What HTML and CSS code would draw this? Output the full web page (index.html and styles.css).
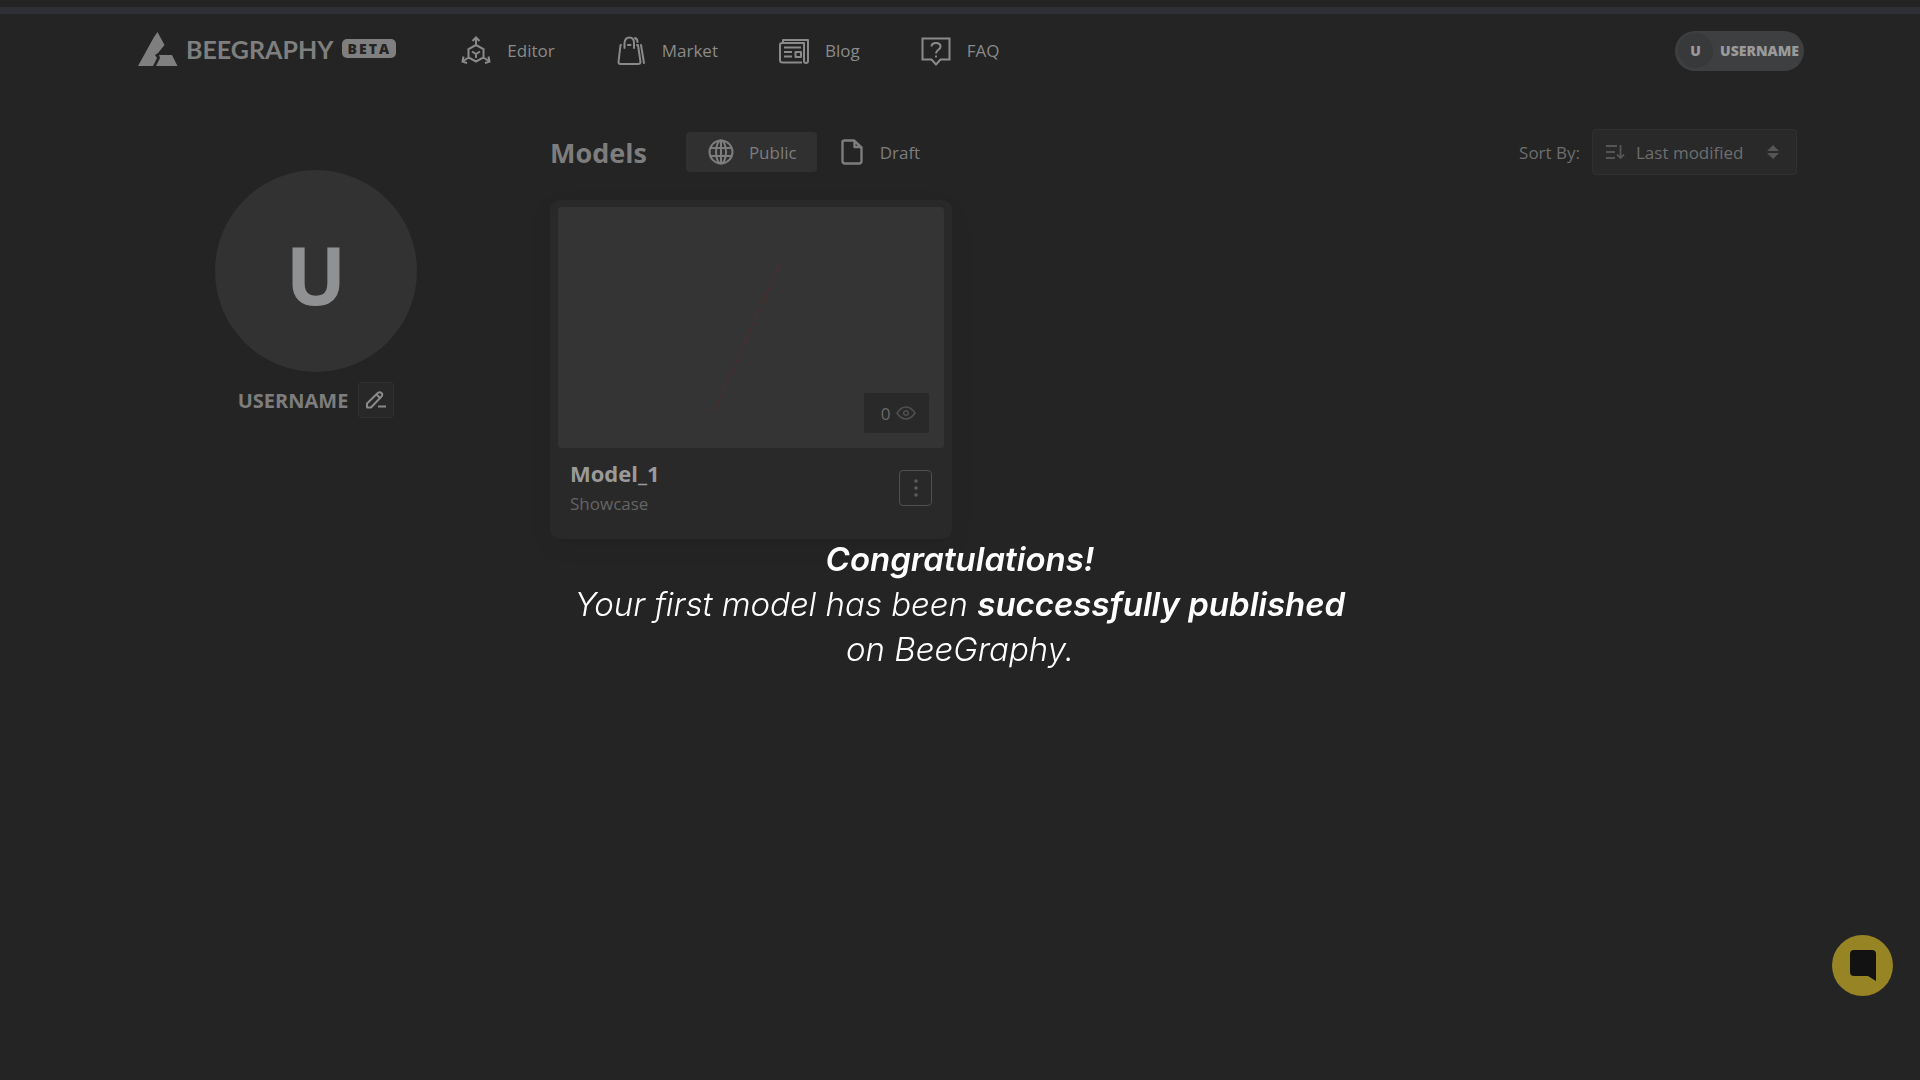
FILE: index.html
```html
<!DOCTYPE html>
<html lang="en">
<head>
    <meta charset="UTF-8">
    <meta name="viewport" content="width=device-width, initial-scale=1.0">
    <title>BeeGraphy - Models</title>
    <link rel="stylesheet" href="styles.css">
</head>
<body>
    <div class="strip"></div>

    <header class="header">
        <a class="logo" href="#">
            <svg width="40" height="34" viewBox="0 0 40 34" fill="currentColor">
                <path d="M19.500 0 26.500 13 20 21 17 23 19 26 15 34H0L16 5z"/>
                <path d="M21 23H34L39.500 34H18L22 26z"/>
            </svg>
            <span class="logo-name">BEEGRAPHY</span>
            <span class="beta">BETA</span>
        </a>
        <nav class="nav">
            <a href="#">
                <svg width="30" height="30" viewBox="0 0 30 30" fill="none" stroke="currentColor" stroke-width="2">
                    <path d="M15 9 22.500 13V21.500L15 25.500 7.500 21.500V13zM11 15.500 15 18 19 15.500M15 18V22M15 9V2M11.500 5 15 1.500 18.500 5M7.500 21.500 1.500 25.500M2.500 20.500 1.500 25.500 6 27M22.500 21.500 28.500 25.500M27.500 20.500 28.500 25.500 24 27"/>
                </svg>
                Editor
            </a>
            <a href="#">
                <svg width="30" height="30" viewBox="0 0 30 30" fill="none" stroke="currentColor" stroke-width="2" stroke-linecap="round" stroke-linejoin="round">
                    <path d="M5 9H4.500L2.500 26Q2.500 28 4.500 28H22Q24.500 28 24.500 26L22 9H21M12 9H14.500M8.500 12V7Q9 1.500 13.500 1.500T18 7V12M19 2Q21.500 3 21.500 6M25 9 28 27"/>
                </svg>
                Market
            </a>
            <a href="#">
                <svg width="30" height="30" viewBox="0 0 30 30" fill="none" stroke="currentColor" stroke-width="2" stroke-linejoin="round">
                    <path d="M4 6V4H29V25Q29 27 27 27T25 25V7H3Q1 7 1 9V24Q1 26.500 3.500 26.500H23M5 11.500H22M5 16H13M5 20.500H13M16.500 16H22V21H16.500z"/>
                </svg>
                Blog
            </a>
            <a href="#">
                <svg width="30" height="30" viewBox="0 0 30 30" fill="none" stroke="currentColor" stroke-width="2">
                    <path d="M1.500 2.500H28.500V23.500H19.500L15 28.500 10.500 23.500H1.500z"/>
                    <path d="M10.500 10.500Q10.500 7 15 7T19.500 10.500C19.500 14 15 13.500 15 17.500M15 19.500V21.500"/>
                </svg>
                FAQ
            </a>
        </nav>
        <button class="user-pill" type="button">
            <span class="user-initial">U</span>
            USERNAME
        </button>
    </header>

    <main class="page">
        <aside class="profile">
            <div class="avatar">U</div>
            <div class="profile-name">
                <span>USERNAME</span>
                <button class="edit-btn" type="button" aria-label="Edit name">
                    <svg width="20" height="18" viewBox="0 0 20 18" fill="none" stroke="currentColor" stroke-width="2" stroke-linejoin="round">
                        <path d="M1 16.500V12.500L12 1.800Q14 .5 15.500 2T15.500 5.500L5 16.500zM10.500 3.500 14 7M12 15.500H20"/>
                    </svg>
                </button>
            </div>
        </aside>

        <section class="models">
            <div class="toolbar">
                <h1>Models</h1>
                <button class="tab active" type="button">
                    <svg width="26" height="26" viewBox="0 0 26 26" fill="none" stroke="currentColor" stroke-width="2">
                        <circle cx="13" cy="13" r="11.500"/>
                        <ellipse cx="13" cy="13" rx="5" ry="11.500"/>
                        <path d="M13 1.500V24.500M2.500 9H23.500M2.500 17H23.500"/>
                    </svg>
                    Public
                </button>
                <button class="tab" type="button">
                    <svg width="26" height="26" viewBox="0 0 26 26" fill="none" stroke="currentColor" stroke-width="2.400" stroke-linejoin="round">
                        <path d="M5 1.500H15L22.500 8.500V22Q22.500 24.500 20 24.500H6Q3.500 24.500 3.500 22V3Q3.500 1.500 5.500 1.500M15.500 1.500V8H22.500"/>
                    </svg>
                    Draft
                </button>
                <div class="sort">
                    <label for="sort">Sort By:</label>
                    <div class="select-box">
                        <svg width="19" height="16" viewBox="0 0 19 16" fill="none" stroke="currentColor" stroke-width="1.800">
                            <path d="M0 2H11M0 8H9M0 14H9M14.500 1V14M11 10.500 14.500 14 18 10.500"/>
                        </svg>
                        <select id="sort">
                            <option>Last modified</option>
                        </select>
                        <svg width="12" height="14" viewBox="0 0 12 14" fill="currentColor">
                            <path d="M6 0 12 6H0zM0 8H12L6 14z"/>
                        </svg>
                    </div>
                </div>
            </div>

            <article class="card">
                <div class="preview">
                    <svg class="curve" width="68" height="150" viewBox="0 0 68 150" fill="none" stroke="#542b2d">
                        <path d="M67 1 1 149" stroke-dasharray="14 2"/>
                    </svg>
                    <div class="views">
                        0
                        <svg width="20" height="14" viewBox="0 0 20 14" fill="none" stroke="currentColor" stroke-width="1.500">
                            <path d="M1 7Q5 1 10 1T19 7Q15 13 10 13T1 7z"/>
                            <circle cx="10" cy="7" r="2.300"/>
                        </svg>
                    </div>
                </div>
                <div class="card-info">
                    <div>
                        <h2>Model_1</h2>
                        <p>Showcase</p>
                    </div>
                    <button class="more-btn" type="button" aria-label="More options">
                        <svg width="4" height="20" viewBox="0 0 4 20" fill="currentColor">
                            <circle cx="2" cy="3" r="1.800"/>
                            <circle cx="2" cy="10" r="1.800"/>
                            <circle cx="2" cy="17" r="1.800"/>
                        </svg>
                    </button>
                </div>
            </article>
        </section>
    </main>

    <div class="message">
        <p><b>Congratulations!</b><br>Your first model has been <b>successfully published</b><br>on BeeGraphy.</p>
    </div>

    <button class="chat-btn" type="button" aria-label="Open chat">
        <svg width="26" height="31" viewBox="0 0 26 31" fill="currentColor">
            <path d="M4 0H22Q26 0 26 4V31L18 26H4Q0 26 0 22V4Q0 0 4 0z"/>
        </svg>
    </button>
</body>
</html>
```

FILE: styles.css
```css
* {
    box-sizing: border-box;
}

body {
    font-family: 'Segoe UI', 'Open Sans', sans-serif;
    font-size: 17px;
    margin: 0;
    padding-top: 7px;
    min-height: 100vh;
    background-color: #242424;
    color: #7d7d7d;
}

a {
    color: inherit;
    text-decoration: none;
}

button,
select {
    font: inherit;
    color: inherit;
    border: none;
    padding: 0;
    background: none;
    cursor: pointer;
}

h1, h2, p {
    margin: 0;
}

svg {
    display: block;
    flex-shrink: 0;
}

.strip {
    height: 7px;
    background-color: #2f3035;
}

.header {
    display: flex;
    align-items: center;
    height: 73px;
    padding: 0 116px 0 138px;
}

.logo {
    display: flex;
    align-items: center;
    padding-bottom: 4px;
    color: #7f7f7f;
}

.logo-name {
    margin: 0 9px 0 8px;
    font-family: Lato, sans-serif;
    font-size: 25px;
    font-weight: bold;
    line-height: 32px;
}

.beta {
    width: 54px;
    border-radius: 5px;
    background-color: #7f7f7f;
    color: #242424;
    font-size: 14px;
    font-weight: 800;
    line-height: 19px;
    letter-spacing: 2px;
    text-align: center;
}

.nav {
    display: flex;
    gap: 61px;
    margin-left: 65px;
}

.nav a {
    display: flex;
    align-items: center;
    gap: 16px;
    color: #8a8a8a;
}

.user-pill {
    display: flex;
    align-items: center;
    gap: 7px;
    height: 40px;
    margin-left: auto;
    padding: 0 5px 0 3px;
    border-radius: 20px;
    background-color: #3e3f40;
    color: #9a9a9a;
    font-size: 14px;
    font-weight: 800;
}

.user-initial {
    width: 35px;
    border-radius: 50%;
    background-color: #38393a;
    line-height: 35px;
}

.page {
    display: flex;
    gap: 56px;
    padding: 42px 123px 0 138px;
}

.profile {
    flex: 0 0 356px;
    display: flex;
    flex-direction: column;
    align-items: center;
    gap: 10px;
    padding-top: 41px;
}

.avatar {
    width: 202px;
    height: 202px;
    border-radius: 50%;
    background-color: #323232;
    color: #909192;
    font-size: 80px;
    font-weight: bold;
    line-height: 208px;
    text-align: center;
}

.profile-name {
    display: flex;
    align-items: center;
    gap: 10px;
    font-size: 20px;
    font-weight: bold;
}

.edit-btn {
    display: grid;
    place-items: center;
    width: 36px;
    height: 36px;
    border: 1px solid #303030;
    border-radius: 4px;
    background-color: #282828;
    color: #8a8a8a;
}

.models {
    flex: 1;
}

.toolbar {
    display: flex;
    align-items: center;
    height: 46px;
    margin-bottom: 25px;
}

.toolbar h1 {
    margin-right: 39px;
    font-size: 27px;
}

.tab {
    display: flex;
    align-items: center;
    gap: 15px;
    height: 40px;
    padding: 0 20px 0 22px;
    border-radius: 4px;
}

.tab.active {
    background-color: #303030;
}

.sort {
    display: flex;
    align-items: center;
    gap: 12px;
    margin-left: auto;
    color: #6e6e6e;
}

.select-box {
    display: flex;
    align-items: center;
    width: 205px;
    height: 46px;
    padding: 0 17px 0 13px;
    border: 1px solid #303030;
    border-radius: 4px;
    background-color: #292929;
}

.select-box svg {
    color: #555555;
}

.select-box select {
    flex: 1;
    min-width: 0;
    margin-left: 11px;
    appearance: none;
}

.card {
    width: 402px;
    padding: 7px 8px;
    border-radius: 10px;
    background-color: #292929;
    box-shadow: 0 8px 24px rgba(0, 0, 0, 0.06);
}

.preview {
    display: flex;
    align-items: flex-end;
    justify-content: space-between;
    height: 241px;
    padding: 15px;
    border-radius: 4px;
    background-color: #343434;
}

.curve {
    margin: 0 0 21px 140px;
}

.views {
    display: flex;
    align-items: center;
    justify-content: center;
    gap: 6px;
    width: 65px;
    height: 40px;
    padding-left: 4px;
    border-radius: 2px;
    background-color: #292929;
    color: #6a6a6a;
}

.views svg {
    color: #505050;
}

.card-info {
    display: flex;
    align-items: center;
    justify-content: space-between;
    height: 84px;
    padding: 0 12px 4px;
}

.card-info h2 {
    color: #9a9a9a;
    font-size: 22px;
    line-height: 32px;
}

.card-info p {
    color: #646464;
    line-height: 30px;
}

.more-btn {
    display: grid;
    place-items: center;
    width: 33px;
    height: 36px;
    border: 1px solid #505050;
    border-radius: 4px;
    color: #5c5c5c;
}

/* text shown over the dimmed page */
.message {
    position: fixed;
    inset: 0;
    display: flex;
    align-items: center;
    justify-content: center;
    padding-top: 128px;
    color: #ffffff;
    font-family: Inter, sans-serif;
    font-size: 33px;
    font-style: italic;
    line-height: 45px;
    text-align: center;
    pointer-events: none;
}

.message p {
    font-weight: 300;
}

.message b {
    font-weight: 600;
}

.chat-btn {
    position: fixed;
    right: 27px;
    bottom: 84px;
    display: grid;
    place-items: center;
    width: 61px;
    height: 61px;
    border-radius: 50%;
    background-color: #968425;
    color: #121212;
}
```
